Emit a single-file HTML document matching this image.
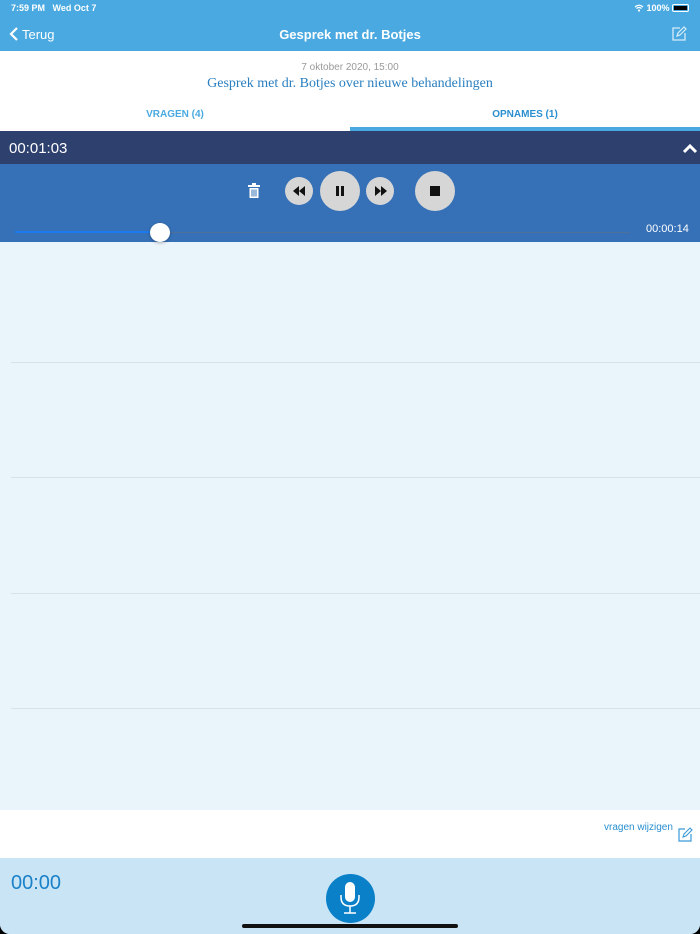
<!DOCTYPE html>
<html><head><style>
*{margin:0;padding:0;box-sizing:border-box}
body{width:700px;height:934px;overflow:hidden;font-family:"Liberation Sans",sans-serif;background:#000;position:relative}
.abs{position:absolute}
</style></head><body>
<div class="abs" style="left:0;top:0;width:700px;height:934px;background:#eaf5fb;border-radius:0 0 10px 10px;overflow:hidden">
<div class="abs" style="left:0;top:0;width:700px;height:51px;background:#4aa9e0"></div>
<div class="abs" style="left:11px;top:3px;color:#fff;font-size:9px;font-weight:bold">7:59 PM&nbsp;&nbsp; Wed Oct 7</div>
<div class="abs" style="left:634px;top:3px;color:#fff;font-size:9px;font-weight:bold">&#8203;<svg width="10" height="8" viewBox="0 0 10 8" style="vertical-align:-1px"><path d="M1 3 Q5 -0.5 9 3 M2.5 4.5 Q5 2.5 7.5 4.5" stroke="#fff" stroke-width="1.3" fill="none"/><circle cx="5" cy="6.5" r="1.1" fill="#fff"/></svg> 100%</div>
<div class="abs" style="left:672px;top:4px;width:17px;height:8px;border:1px solid #fff;border-radius:2px;padding:1px"><div style="width:100%;height:100%;background:#000"></div></div>
<svg class="abs" style="left:8px;top:26px" width="12" height="16" viewBox="0 0 12 16"><path d="M9 2 L3 8 L9 14" stroke="#fff" stroke-width="2.2" fill="none"/></svg>
<div class="abs" style="left:22px;top:27px;color:#fff;font-size:13px">Terug</div>
<div class="abs" style="left:0;top:27px;width:700px;text-align:center;color:#fff;font-size:13px;font-weight:bold">Gesprek met dr. Botjes</div>
<svg class="abs" style="left:671px;top:26px" width="16" height="16" viewBox="0 0 16 16"><path d="M9 2 H2 V14 H14 V7" stroke="#d6ecf8" stroke-width="1.3" fill="none"/><path d="M6 10 L7 7 L13 1 L15 3 L9 9 Z" stroke="#d6ecf8" stroke-width="1.2" fill="none"/></svg>
<div class="abs" style="left:0;top:51px;width:700px;height:80px;background:#fff"></div>
<div class="abs" style="left:0;top:62px;width:700px;text-align:center;color:#999;font-size:10px">7 oktober 2020, 15:00</div>
<div class="abs" style="left:0;top:76px;width:700px;text-align:center;color:#2a7fc0;font-size:14px;font-family:'Liberation Serif',serif">Gesprek met dr. Botjes over nieuwe behandelingen</div>
<div class="abs" style="left:0;top:109px;width:350px;text-align:center;color:#4aa9e0;font-size:10px;font-weight:bold">VRAGEN (4)</div>
<div class="abs" style="left:350px;top:109px;width:350px;text-align:center;color:#2a8fd0;font-size:10px;font-weight:bold">OPNAMES (1)</div>
<div class="abs" style="left:350px;top:127px;width:350px;height:4px;background:#4aa9e0"></div>
<div class="abs" style="left:0;top:131px;width:700px;height:33px;background:#2e416e"></div>
<div class="abs" style="left:9px;top:140px;color:#fff;font-size:15px">00:01:03</div>
<svg class="abs" style="left:682px;top:142px" width="16" height="12" viewBox="0 0 16 12"><path d="M2 10 L8 4 L14 10" stroke="#fff" stroke-width="3" fill="none"/></svg>
<div class="abs" style="left:0;top:164px;width:700px;height:78px;background:#3671b7"></div>
<svg class="abs" style="left:247px;top:183px" width="14" height="16" viewBox="0 0 14 16"><rect x="1" y="2" width="12" height="2" fill="#fff"/><rect x="5" y="0" width="4" height="2" fill="#fff"/><path d="M2.5 5 H11.5 V15 H2.5 Z" fill="#fff"/><path d="M5 6.5 V13.5 M7 6.5 V13.5 M9 6.5 V13.5" stroke="#3671b7" stroke-width="1"/></svg>
<div class="abs" style="left:285px;top:177px;width:28px;height:28px;border-radius:50%;background:#d6d6d6"></div>
<svg class="abs" style="left:293px;top:186px" width="12" height="10" viewBox="0 0 12 10"><path d="M6 0 L0 5 L6 10Z M12 0 L6 5 L12 10Z" fill="#111"/></svg>
<div class="abs" style="left:320px;top:171px;width:40px;height:40px;border-radius:50%;background:#d6d6d6"></div>
<div class="abs" style="left:336px;top:186px;width:3px;height:10px;background:#111"></div>
<div class="abs" style="left:341px;top:186px;width:3px;height:10px;background:#111"></div>
<div class="abs" style="left:366px;top:177px;width:28px;height:28px;border-radius:50%;background:#d6d6d6"></div>
<svg class="abs" style="left:375px;top:186px" width="12" height="10" viewBox="0 0 12 10"><path d="M0 0 L6 5 L0 10Z M6 0 L12 5 L6 10Z" fill="#111"/></svg>
<div class="abs" style="left:415px;top:171px;width:40px;height:40px;border-radius:50%;background:#d6d6d6"></div>
<div class="abs" style="left:430px;top:186px;width:10px;height:10px;background:#111"></div>
<div class="abs" style="left:15px;top:232px;width:615px;height:1px;background:#4f6f9d"></div>
<div class="abs" style="left:15px;top:231px;width:145px;height:2px;background:#1a7af0"></div>
<div class="abs" style="left:150px;top:223px;width:20px;height:19px;border-radius:50%;background:#fff;box-shadow:0 1px 3px rgba(0,0,0,.3)"></div>
<div class="abs" style="left:646px;top:223px;color:#fff;font-size:11px">00:00:14</div>
<div class="abs" style="left:11px;top:362px;width:689px;height:1px;background:#d6e1e8"></div>
<div class="abs" style="left:11px;top:477px;width:689px;height:1px;background:#d6e1e8"></div>
<div class="abs" style="left:11px;top:593px;width:689px;height:1px;background:#d6e1e8"></div>
<div class="abs" style="left:11px;top:708px;width:689px;height:1px;background:#d6e1e8"></div>
<div class="abs" style="left:0;top:810px;width:700px;height:48px;background:#fff"></div>
<div class="abs" style="left:604px;top:822px;color:#2a8fd0;font-size:10px">vragen wijzigen</div>
<svg class="abs" style="left:678px;top:826px" width="15" height="16" viewBox="0 0 15 16"><path d="M7 3 H1 V15 H13 V8" stroke="#3a9ad8" stroke-width="1.2" fill="none"/><path d="M5 11 L6 8 L12 2 L14 4 L8 10 Z" stroke="#3a9ad8" stroke-width="1.1" fill="none"/></svg>
<div class="abs" style="left:0;top:858px;width:700px;height:76px;background:#c8e4f5"></div>
<div class="abs" style="left:11px;top:872px;color:#1a82c8;font-size:20px">00:00</div>
<div class="abs" style="left:326px;top:874px;width:49px;height:49px;border-radius:50%;background:#0a80c8"></div>
<svg class="abs" style="left:336px;top:880px" width="28" height="38" viewBox="0 0 28 38"><rect x="9" y="2" width="10" height="20" rx="5" fill="#fff"/><path d="M5 15 V17 Q5 26 14 26 Q23 26 23 17 V15 M14 26 V33 M8 33 H20" stroke="#fff" stroke-width="1.5" fill="none"/></svg>
<div class="abs" style="left:242px;top:924px;width:216px;height:4px;border-radius:2px;background:#111"></div>
</div>
</body></html>
